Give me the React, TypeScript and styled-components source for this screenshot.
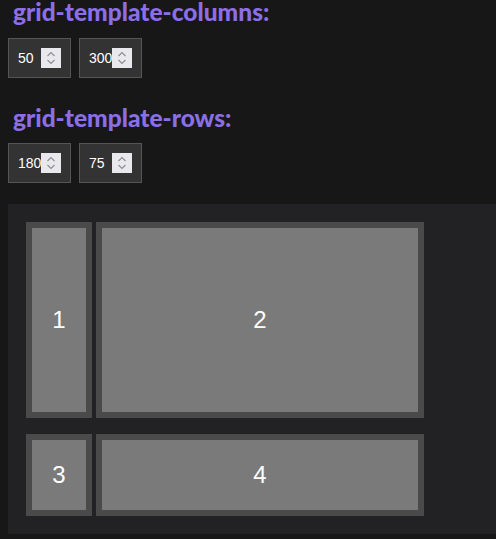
import React from "react";
import styled, { createGlobalStyle } from "styled-components";

const GlobalStyle = createGlobalStyle`
  html, body {
    margin: 0;
    padding: 0;
    background: #171717;
    overflow: hidden;
  }
  body {
    font-family: "Liberation Sans", Arial, sans-serif;
  }
`;

const Page = styled.div`
  display: flex;
  flex-direction: column;
  padding: 0 0 0 8px;
  width: 496px;
  box-sizing: border-box;
`;

const Heading = styled.h2<{ $top: number }>`
  margin: ${(p) => p.$top}px 0 0 5px;
  font-family: Lato, "Open Sans", sans-serif;
  font-weight: 900;
  font-size: 24.5px;
  line-height: 24px;
  color: #8c6ee6;
`;

const InputRow = styled.div<{ $top: number }>`
  display: flex;
  gap: 8px;
  margin-top: ${(p) => p.$top}px;
`;

const NumberBox = styled.label`
  display: flex;
  align-items: center;
  width: 63px;
  height: 40px;
  box-sizing: border-box;
  padding: 9px;
  background: #333333;
  border: 1px solid #555555;
`;

const NumberText = styled.input`
  width: 23px;
  min-width: 0;
  padding: 0;
  margin: 0;
  border: none;
  outline: none;
  background: transparent;
  color: #ffffff;
  font-family: "Liberation Sans", Arial, sans-serif;
  font-size: 14px;
  overflow: visible;
`;

const Spinner = styled.span`
  display: flex;
  width: 20px;
  height: 20px;
  flex: none;
  background: #e9e9ed;
`;

const Preview = styled.div`
  margin-top: 21px;
  width: 500px;
  box-sizing: border-box;
  padding: 18px;
  background: #222224;
`;

const Grid = styled.div`
  display: grid;
  grid-template-columns: 66px 328px;
  grid-template-rows: 196px 82px;
  column-gap: 4px;
  row-gap: 16px;
`;

const Cell = styled.div`
  display: flex;
  align-items: center;
  justify-content: center;
  box-sizing: border-box;
  border: 6px solid #4a4a4a;
  background: #7a7a7a;
  color: #ffffff;
  font-family: "Liberation Sans", Arial, sans-serif;
  font-size: 24px;
`;

function SpinIcon() {
  return (
    <Spinner>
      <svg width="20" height="20" viewBox="0 0 20 20" fill="none">
        <polyline points="6.5,8 10,4.5 13.5,8" stroke="#8e8e94" strokeWidth="1.2" />
        <polyline points="6.5,12 10,15.5 13.5,12" stroke="#8e8e94" strokeWidth="1.2" />
      </svg>
    </Spinner>
  );
}

function NumberField({ value }: { value: number }) {
  return (
    <NumberBox>
      <NumberText type="text" defaultValue={String(value)} readOnly />
      <SpinIcon />
    </NumberBox>
  );
}

export default function App() {
  const columns = [50, 300];
  const rows = [180, 75];
  return (
    <>
      <GlobalStyle />
      <Page>
        <Heading $top={0}>grid-template-columns:</Heading>
        <InputRow $top={14}>
          {columns.map((c, i) => (
            <NumberField key={i} value={c} />
          ))}
        </InputRow>
        <Heading $top={28}>grid-template-rows:</Heading>
        <InputRow $top={13}>
          {rows.map((r, i) => (
            <NumberField key={i} value={r} />
          ))}
        </InputRow>
        <Preview>
          <Grid>
            {[1, 2, 3, 4].map((n) => (
              <Cell key={n}>{n}</Cell>
            ))}
          </Grid>
        </Preview>
      </Page>
    </>
  );
}
